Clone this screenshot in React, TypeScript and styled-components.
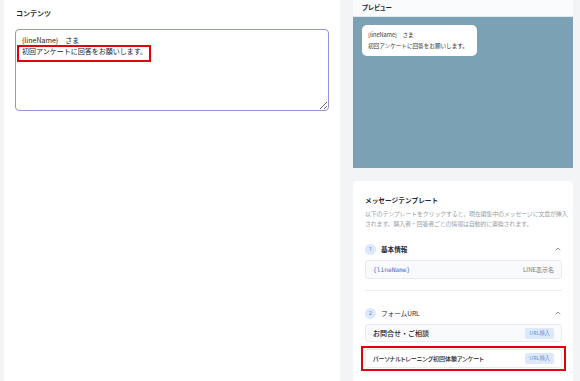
import React from "react";
import styled, { createGlobalStyle } from "styled-components";
import { ChevronUp } from "lucide-react";

const GlobalStyle = createGlobalStyle`
  html, body {
    margin: 0;
    padding: 0;
    background: #f3f4f6;
  }
  body {
    font-family: "Noto Sans CJK JP", "Noto Sans", sans-serif;
    color: #1f2937;
  }
  * { box-sizing: border-box; }
`;

const Page = styled.div`
  display: flex;
  gap: 13px;
  height: 381px;
  padding-left: 4px;
  overflow: hidden;
`;

const LeftPanel = styled.div`
  width: 336px;
  background: #fff;
  padding: 7px 11px 0 11px;
`;

const Heading = styled.div`
  font-size: 7px;
  font-weight: 700;
  line-height: 12px;
  padding-left: 1px;
  margin-bottom: 10px;
`;

const EditorWrap = styled.div`
  position: relative;
`;

const Editor = styled.textarea`
  display: block;
  width: 314px;
  height: 82px;
  border: 1.5px solid #9393dd;
  border-radius: 4px;
  padding: 5px 6px 3px;
  font-family: "Noto Sans CJK JP", sans-serif;
  font-size: 7px;
  line-height: 11px;
  color: #222;
  outline: none;
  resize: vertical;
  background: #fff;
`;

const Mark = styled.div<{ $top: number; $left: number; $w: number; $h: number }>`
  position: absolute;
  top: ${(p) => p.$top}px;
  left: ${(p) => p.$left}px;
  width: ${(p) => p.$w}px;
  height: ${(p) => p.$h}px;
  border: 2.3px solid #e3000b;
  pointer-events: none;
`;

const RightColumn = styled.div`
  width: 220px;
  display: flex;
  flex-direction: column;
  gap: 13px;
`;

const PreviewCard = styled.div`
  display: flex;
  flex-direction: column;
`;

const PreviewHeader = styled.div`
  height: 17px;
  background: #fafbfc;
  font-size: 6.5px;
  font-weight: 700;
  padding: 2px 9px 0;
  line-height: 10px;
  border-bottom: 1px solid #e3e7ea;
  font-feature-settings: "palt";
`;

const PreviewArea = styled.div`
  height: 151px;
  background: #7ba1b5;
  padding: 8px 9px;
`;

const Bubble = styled.div`
  width: 115px;
  background: #fff;
  border-radius: 5px;
  padding: 5px 6px 4px;
  font-size: 5.6px;
  line-height: 11px;
  white-space: nowrap;
  color: #333;
`;

const TemplateCard = styled.div`
  background: #fff;
  border-radius: 4px 4px 0 0;
  padding: 13px 11px 0 12px;
  flex: 1;
`;

const CardTitle = styled.div`
  font-size: 6.7px;
  font-weight: 700;
  line-height: 12px;
`;

const Description = styled.div`
  margin-top: 3px;
  margin-right: -8px;
  font-size: 6px;
  letter-spacing: -0.2px;
  line-height: 9.5px;
  color: #9aa1a9;
`;

const SectionHeader = styled.div`
  display: flex;
  align-items: center;
  height: 12px;
  margin: 0 0 5px;
  gap: 5px;
`;

const Badge = styled.span`
  width: 11px;
  height: 11px;
  border-radius: 50%;
  background: #dce8fb;
  color: #4a7fd8;
  font-size: 5px;
  display: flex;
  align-items: center;
  justify-content: center;
  font-family: "Noto Sans", sans-serif;
`;

const SectionLabel = styled.span<{ $bold?: boolean }>`
  flex: 1;
  font-size: 6.6px;
  font-weight: ${(p) => (p.$bold ? 700 : 400)};
`;

const Chevron = styled(ChevronUp)`
  color: #555;
`;

const Section = styled.div<{ $top: number }>`
  margin-top: ${(p) => p.$top}px;
`;

const Row = styled.div<{ $h: number; $white?: boolean }>`
  position: relative;
  display: flex;
  align-items: center;
  justify-content: space-between;
  height: ${(p) => p.$h}px;
  border: 1px solid #e8eaed;
  border-radius: 3px;
  background: ${(p) => (p.$white ? "#fff" : "#f9fafb")};
  padding: 0 7px;
`;

const Token = styled.span`
  font-family: "DejaVu Sans Mono", monospace;
  font-size: 6.2px;
  color: #4a6fd0;
`;

const RowHint = styled.span`
  font-size: 6px;
  color: #777;
  font-feature-settings: "palt";
`;

const RowLabel = styled.span<{ $narrow?: boolean }>`
  font-size: ${(p) => (p.$narrow ? 6 : 7)}px;
  font-weight: 500;
  color: #222;
  font-feature-settings: ${(p) => (p.$narrow ? '"palt"' : "normal")};
`;

const InsertButton = styled.span`
  background: #dde9fb;
  color: #6d8fcf;
  font-size: 5.3px;
  padding: 0 4px;
  height: 11px;
  line-height: 11px;
  border-radius: 2px;
`;

const Divider = styled.div`
  height: 1px;
  background: #eceef1;
  margin: 11px 0 0;
`;

const RowList = styled.div`
  display: flex;
  flex-direction: column;
  gap: 7px;
`;

export default function App() {
  return (
    <>
      <GlobalStyle />
      <Page>
        <LeftPanel>
          <Heading>コンテンツ</Heading>
          <EditorWrap>
            <Editor
              readOnly
              value={"{lineName}　さま\n初回アンケートに回答をお願いします。"}
            />
            <Mark $top={16} $left={2} $w={134} $h={17} />
          </EditorWrap>
        </LeftPanel>
        <RightColumn>
          <PreviewCard>
            <PreviewHeader>プレビュー</PreviewHeader>
            <PreviewArea>
              <Bubble>
                {"{lineName}　さま"}
                <br />
                初回アンケートに回答をお願いします。
              </Bubble>
            </PreviewArea>
          </PreviewCard>
          <TemplateCard>
            <CardTitle>メッセージテンプレート</CardTitle>
            <Description>
              以下のテンプレートをクリックすると、現在編集中のメッセージに文章が挿入されます。購入者・回答者ごとの情報は自動的に置換されます。
            </Description>
            <Section $top={15}>
              <SectionHeader>
                <Badge>1</Badge>
                <SectionLabel $bold>基本情報</SectionLabel>
                <Chevron size={8} strokeWidth={2} />
              </SectionHeader>
              <Row $h={19}>
                <Token>{"{lineName}"}</Token>
                <RowHint>LINE表示名</RowHint>
              </Row>
            </Section>
            <Divider />
            <Section $top={16}>
              <SectionHeader>
                <Badge>2</Badge>
                <SectionLabel>フォームURL</SectionLabel>
                <Chevron size={8} strokeWidth={2} />
              </SectionHeader>
              <RowList>
                <Row $h={18}>
                  <RowLabel>お問合せ・ご相談</RowLabel>
                  <InsertButton>URL挿入</InsertButton>
                </Row>
                <Row $h={19} $white>
                  <RowLabel $narrow>パーソナルトレーニング初回体験アンケート</RowLabel>
                  <InsertButton>URL挿入</InsertButton>
                  <Mark $top={-4} $left={-5} $w={205} $h={25} />
                </Row>
              </RowList>
            </Section>
          </TemplateCard>
        </RightColumn>
      </Page>
    </>
  );
}
